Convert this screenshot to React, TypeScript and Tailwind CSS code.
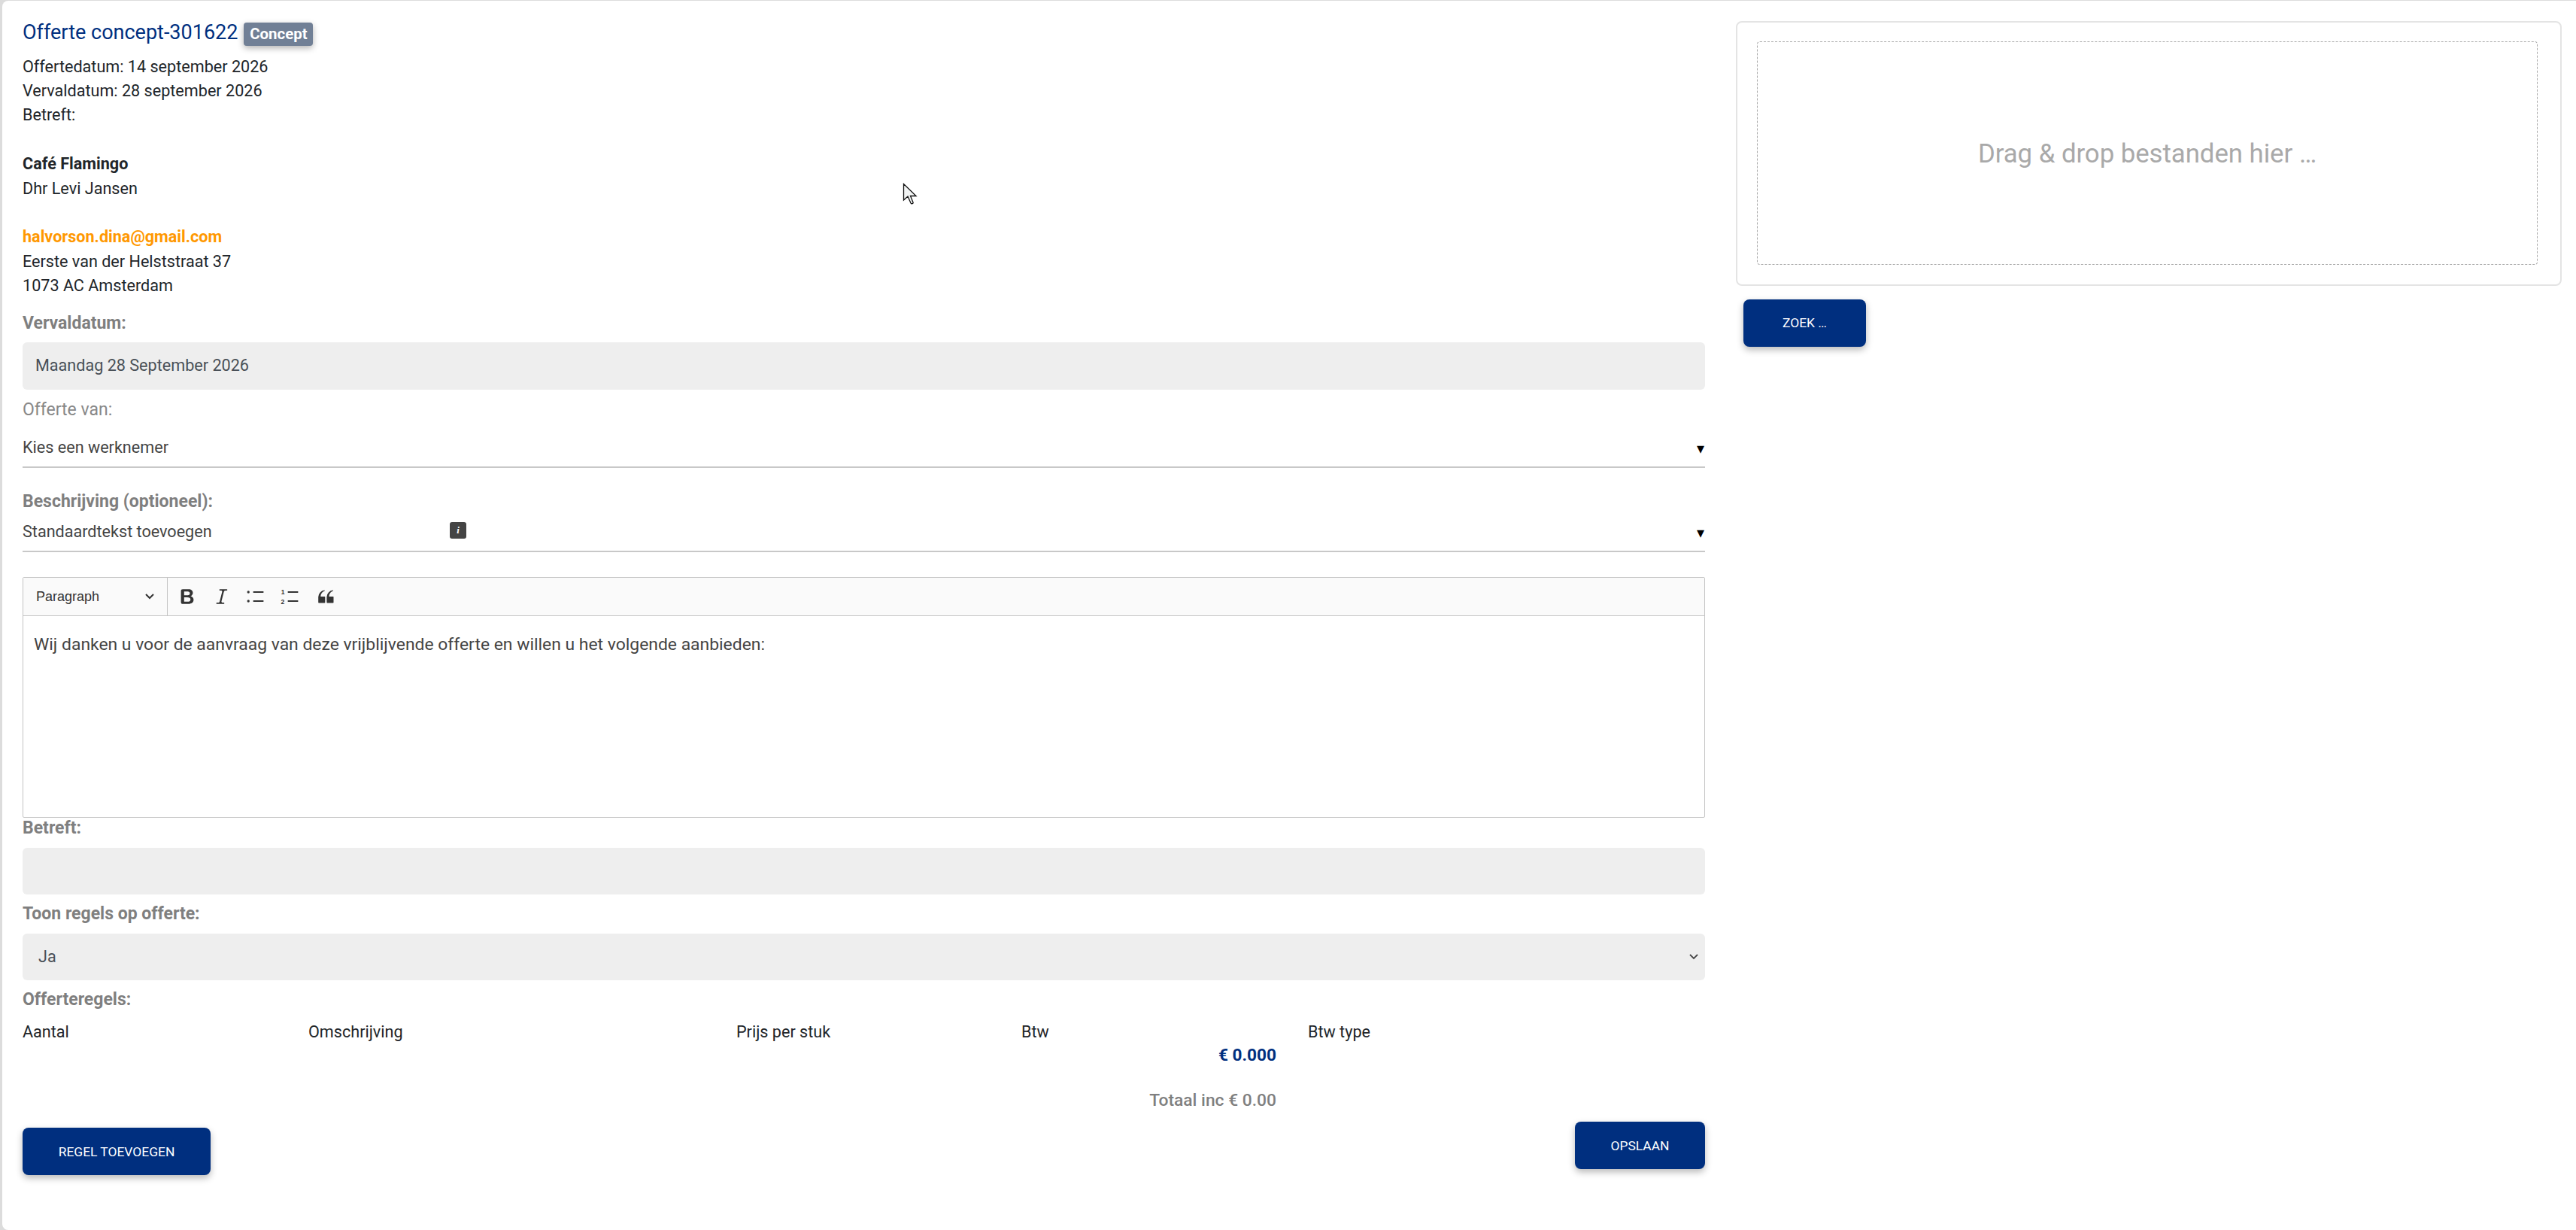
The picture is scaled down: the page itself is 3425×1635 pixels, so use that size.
import React from "react";

const Label = ({ children, className = "" }: { children: React.ReactNode; className?: string }) => (
  <div className={`h-8 leading-8 text-[23px] font-bold text-[#7f7f7f] ${className}`}>{children}</div>
);

const Btn = ({ children, className = "" }: { children: React.ReactNode; className?: string }) => (
  <button className={`flex items-center justify-center h-[63px] rounded-lg bg-[#002f7f] text-white text-[17.4px] font-normal uppercase shadow-[0_4px_10px_rgba(0,0,0,0.28)] ${className}`}>
    {children}
  </button>
);

export default function App() {
  return (
    <div className="w-[3425px] h-[1635px] bg-[#dcdcdc] pl-[3px] pt-[1px] overflow-hidden font-['Roboto',sans-serif] text-[21.6px] text-[#212529]">
      <div className="relative flex h-full w-full bg-white rounded-l-lg pl-[27px] pt-[22px]">
        <div className="w-[2237px] shrink-0">
          <div className="flex items-center h-10 gap-2">
            <span className="mt-[1px] text-[27px] text-[#002f7f]">Offerte concept-301622</span>
            <span className="flex items-center justify-center w-[92px] h-[31px] mt-[5px] rounded bg-[#718096] text-white text-[20.4px] font-bold shadow-[0_3px_8px_rgba(0,0,0,0.3)]">Concept</span>
          </div>
          <div className="mt-[9.5px] leading-[32.4px]">
            <div>Offertedatum: 14 september 2026</div>
            <div>Vervaldatum: 28 september 2026</div>
            <div>Betreft:</div>
            <div>&nbsp;</div>
            <div className="font-bold">Café Flamingo</div>
            <div>Dhr Levi Jansen</div>
            <div>&nbsp;</div>
            <div className="font-bold text-[#ff9800]">halvorson.dina@gmail.com</div>
            <div>Eerste van der Helststraat 37</div>
            <div>1073 AC Amsterdam</div>
          </div>

          <Label className="mt-[17.5px]">Vervaldatum:</Label>
          <div className="mt-[9px] flex items-center h-[63px] rounded-md bg-[#eeeeee] pl-[17px] text-[#495057]">Maandag 28 September 2026</div>

          <div className="mt-[11px] h-8 leading-8 text-[23px] text-[#888888]">Offerte van:</div>
          <div className="mt-[9px] flex items-center justify-between h-[52px] border-b-2 border-[#c8c8c8] pt-[1px] pr-[1px] text-[#444444]">
            <span>Kies een werknemer</span>
            <span className="text-black text-[20px] font-['DejaVu_Sans',sans-serif]">▾</span>
          </div>

          <Label className="mt-[29px]">Beschrijving (optioneel):</Label>
          <div className="relative flex items-center justify-between h-[51px] border-b-2 border-[#c8c8c8] pr-[1px] text-[#444444]">
            <span>Standaardtekst toevoegen</span>
            <span className="text-black text-[20px] font-['DejaVu_Sans',sans-serif]">▾</span>
            <span className="absolute left-[568px] top-[11px] flex items-center justify-center w-[22px] h-[22px] rounded-[3px] bg-[#444444] text-white text-[13px] italic font-bold font-['Liberation_Serif',serif]">i</span>
          </div>

          <div className="mt-[33px] h-[320px] border border-[#c4c4c4] rounded-[2px] flex flex-col">
            <div className="flex items-center h-[51px] shrink-0 bg-[#fafafa] border-b border-[#c4c4c4]">
              <div className="flex items-center justify-between w-[192px] h-full border-r border-[#c4c4c4] pl-[17px] pr-[16px] text-[18px] text-[#333333] font-['Liberation_Sans',sans-serif]">
                <span>Paragraph</span>
                <svg width="14" height="10" viewBox="0 0 14 10" fill="none" stroke="#333" strokeWidth="2"><path d="M2 2l5 5 5-5" /></svg>
              </div>
              <div className="flex items-center gap-[18px] pl-[12px] text-[#333333]">
                <svg width="28" height="28" viewBox="0 0 20 20" fill="#333"><path d="M10.187 17H5.773c-.637 0-1.092-.138-1.364-.415-.273-.277-.409-.718-.409-1.323V4.738c0-.617.14-1.062.419-1.332.279-.27.73-.406 1.354-.406h4.68c.69 0 1.288.041 1.793.124.506.083.96.242 1.36.478.341.197.644.447.906.75a3.262 3.262 0 0 1 .808 2.162c0 1.401-.722 2.426-2.167 3.075C15.05 10.175 16 11.315 16 13.01a3.756 3.756 0 0 1-2.296 3.504 6.1 6.1 0 0 1-1.517.377c-.571.073-1.238.11-2 .11zm-.217-6.217H7v4.087h3.069c1.977 0 2.965-.69 2.965-2.072 0-.707-.256-1.22-.768-1.537-.512-.319-1.277-.478-2.296-.478zM7 5.13v3.619h2.606c.729 0 1.292-.067 1.69-.2a1.6 1.6 0 0 0 .91-.765c.165-.267.247-.566.247-.897 0-.707-.26-1.176-.778-1.409-.519-.232-1.31-.348-2.375-.348H7z" /></svg>
                <svg width="28" height="28" viewBox="0 0 20 20" fill="#333"><path d="m9.586 14.633.021.004c-.036.335.095.655.393.962.082.083.173.15.274.201h1.474a.6.6 0 1 1 0 1.2H5.304a.6.6 0 0 1 0-1.2h1.15c.474-.07.809-.182 1.005-.334.157-.122.291-.32.404-.597l2.416-9.55a1.053 1.053 0 0 0-.281-.823 1.12 1.12 0 0 0-.442-.296H8.15a.6.6 0 0 1 0-1.2h6.443a.6.6 0 1 1 0 1.2h-1.195c-.376.056-.65.155-.823.296-.215.175-.423.439-.623.79l-2.366 9.347z" /></svg>
                <svg width="28" height="28" viewBox="0 0 20 20" fill="#333"><circle cx="2.3" cy="5.7" r="1.2" /><circle cx="2.3" cy="14.3" r="1.2" /><rect x="6.8" y="5" width="10" height="1.4" rx=".5" /><rect x="6.8" y="13.6" width="10" height="1.4" rx=".5" /></svg>
                <svg width="28" height="28" viewBox="0 0 20 20" fill="#333"><text x="0.6" y="8" fontSize="6" fontWeight="700" fontFamily="Liberation Sans">1</text><text x="0.4" y="17" fontSize="6" fontWeight="700" fontFamily="Liberation Sans">2</text><rect x="6.8" y="5" width="10" height="1.4" rx=".5" /><rect x="6.8" y="13.6" width="10" height="1.4" rx=".5" /></svg>
                <svg width="28" height="28" viewBox="0 0 20 20" fill="#333"><path d="M3 10.423a6.5 6.5 0 0 1 6.056-6.408l.038.67C6.448 5.423 5.354 7.663 5.22 10H9c.552 0 .5.432.5.986v4.511c0 .554-.448.503-1 .503h-5c-.552 0-.5-.449-.5-1.003v-4.574zm8 0a6.5 6.5 0 0 1 6.056-6.408l.038.67c-2.646.739-3.74 2.979-3.873 5.315H17c.552 0 .5.432.5.986v4.511c0 .554-.448.503-1 .503h-5c-.552 0-.5-.449-.5-1.003v-4.574z" /></svg>
              </div>
            </div>
            <div className="pl-[14px] pt-[22px] leading-[32px] text-[22.9px] text-[#444444]">
              Wij danken u voor de aanvraag van deze vrijblijvende offerte en willen u het volgende aanbieden:
            </div>
          </div>

          <div className="h-7 leading-7 text-[23px] font-bold text-[#7f7f7f]">Betreft:</div>
          <div className="mt-3 h-[62px] rounded-md bg-[#eeeeee]" />
          <Label className="mt-[10px]">Toon regels op offerte:</Label>
          <div className="mt-[10px] flex items-center justify-between h-[62px] rounded-md bg-[#eeeeee] pl-[21px] pr-[8px] text-[#495057]">
            <span>Ja</span>
            <svg width="14" height="10" viewBox="0 0 14 10" fill="none" stroke="#444" strokeWidth="1.8"><path d="M2 2l5 5 5-5" /></svg>
          </div>
          <Label className="mt-[10px]">Offerteregels:</Label>

          <div className="mt-[11px] grid grid-cols-[380px_569px_379px_381px_1fr] h-8 leading-8 text-[#212529]">
            <span>Aantal</span>
            <span>Omschrijving</span>
            <span>Prijs per stuk</span>
            <span>Btw</span>
            <span>Btw type</span>
          </div>
          <div className="w-[1667px] h-[30px] leading-[30px] text-right text-[22.6px] font-bold text-[#002f7f]">€ 0.000</div>
          <div className="w-[1667px] mt-[29px] h-8 leading-8 text-right text-[22.8px] font-medium text-[#7f7f7f]">Totaal inc € 0.00</div>
          <div className="mt-3 flex items-start justify-between">
            <Btn className="mt-2 w-[250px]">Regel toevoegen</Btn>
            <Btn className="w-[173px]">Opslaan</Btn>
          </div>
        </div>

        <div className="ml-[41px] w-[1098px] shrink-0 pt-[5px]">
          <div className="h-[352px] border-2 border-[#e4e4e4] rounded-lg pl-[26px] pr-[30px] pt-[25px] pb-[26px]">
            <div className="flex items-center justify-center h-full border border-dashed border-[#a8a8a8] rounded pt-[2px] text-[34.7px] text-[#a9a9a9]">
              Drag &amp; drop bestanden hier …
            </div>
          </div>
          <Btn className="mt-[18px] ml-[10px] w-[163px]">Zoek …</Btn>
        </div>

        <svg className="absolute left-[1197px] top-[242px]" width="20" height="31" viewBox="0 0 20 31" fill="#f2f4f4" stroke="#111" strokeWidth="1.3">
          <path d="M1.5 1.5v21.5l5.5-5 4 9c.8 1.6 3.6.7 3-1l-3.500-8.500 7.500 0z" />
        </svg>
      </div>
    </div>
  );
}
